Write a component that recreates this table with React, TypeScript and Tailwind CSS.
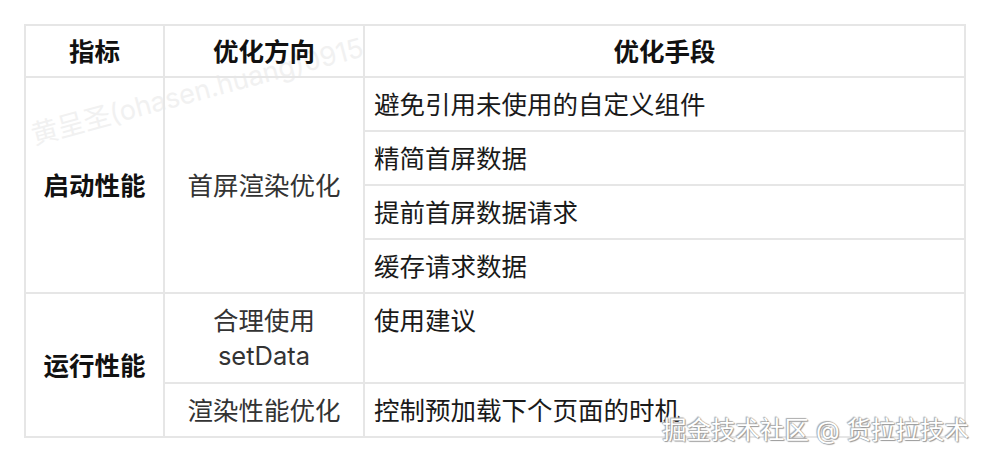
import React from "react";

const font = { fontFamily: '"Inter", "Noto Sans CJK SC", sans-serif' };

export default function App() {
  const b = "border-[2px] border-[#e6e6e6]";
  return (
    <div className="relative w-[988px] h-[462px] bg-white overflow-hidden" style={font}>
      <div className="absolute left-[32px] top-[116px] -rotate-[15deg] origin-left text-[27px] text-[#f1f1f1] whitespace-nowrap pointer-events-none">
        黄呈圣(ohasen.huang)0915
      </div>
      <div className="relative pl-[24px] pt-[24px]">
        <table className="border-collapse table-fixed w-[940px] text-[25.5px] leading-[35px]">
          <colgroup>
            <col className="w-[139px]" />
            <col className="w-[200px]" />
            <col className="w-[601px]" />
          </colgroup>
          <thead>
            <tr className="h-[52px] text-[#111] font-bold">
              <th className={`${b} text-center`}>指标</th>
              <th className={`${b} text-center`}>优化方向</th>
              <th className={`${b} text-center`}>优化手段</th>
            </tr>
          </thead>
          <tbody>
            <tr className="h-[54px]">
              <td rowSpan={4} className={`${b} text-center font-bold text-[#111]`}>启动性能</td>
              <td rowSpan={4} className={`${b} text-center text-[#333]`}>首屏渲染优化</td>
              <td className={`${b} px-[9px] text-[#1a1a1a]`}>避免引用未使用的自定义组件</td>
            </tr>
            <tr className="h-[54px]">
              <td className={`${b} px-[9px] text-[#1a1a1a]`}>精简首屏数据</td>
            </tr>
            <tr className="h-[54px]">
              <td className={`${b} px-[9px] text-[#1a1a1a]`}>提前首屏数据请求</td>
            </tr>
            <tr className="h-[54px]">
              <td className={`${b} px-[9px] text-[#1a1a1a]`}>缓存请求数据</td>
            </tr>
            <tr className="h-[90px]">
              <td rowSpan={2} className={`${b} text-center font-bold text-[#111]`}>运行性能</td>
              <td className={`${b} text-center text-[#333] py-[9px]`}>
                合理使用
                <br />
                setData
              </td>
              <td className={`${b} px-[9px] pt-[9px] align-top text-[#1a1a1a]`}>使用建议</td>
            </tr>
            <tr className="h-[54px]">
              <td className={`${b} text-center text-[#333]`}>渲染性能优化</td>
              <td className={`${b} px-[9px] text-[#1a1a1a]`}>控制预加载下个页面的时机</td>
            </tr>
          </tbody>
        </table>
      </div>
      <div className="absolute left-[662px] top-[414px] text-[24.5px] leading-[32px] text-white whitespace-nowrap [text-shadow:0_0_1px_#8a8a8a,1px_1px_1px_#9a9a9a,-1px_-1px_1px_#b0b0b0]">
        掘金技术社区 @ 货拉拉技术
      </div>
    </div>
  );
}
